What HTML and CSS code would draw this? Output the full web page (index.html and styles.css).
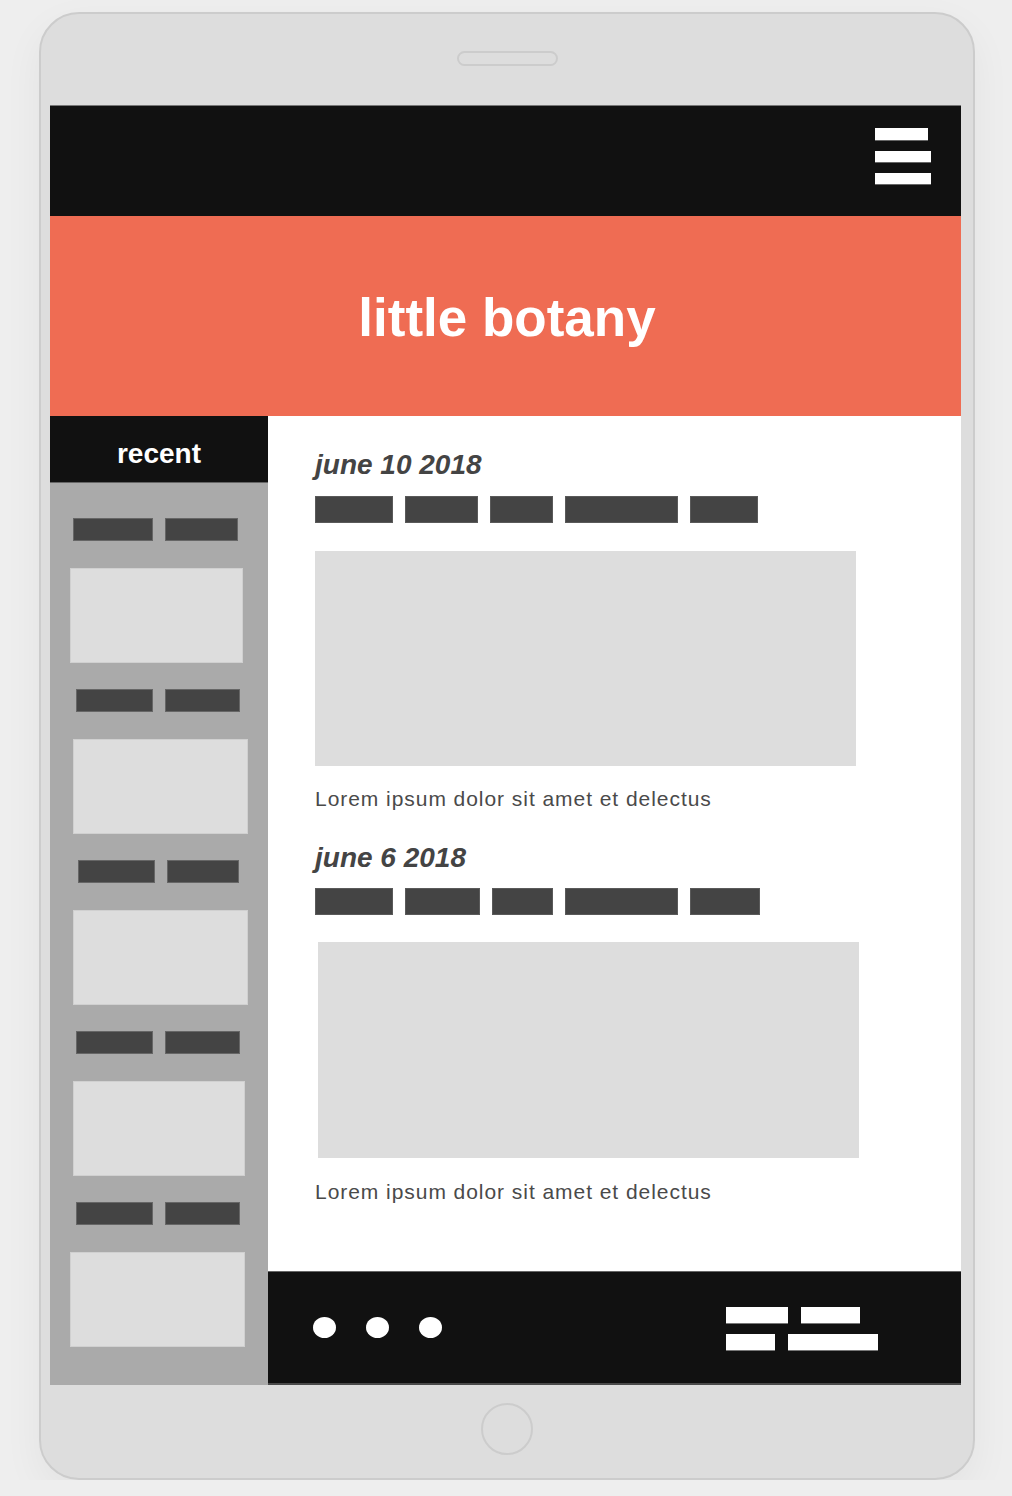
FILE: index.html
```html
<!DOCTYPE html>
<html>
<head>
<meta charset="utf-8">
<link rel="stylesheet" href="styles.css">
</head>
<body>
<div class="tablet">
  <div class="speaker"></div>
  <div class="screen">
    <div class="topbar">
      <div class="burger"><span class="b1"></span><span></span><span></span></div>
    </div>
    <div class="hero"><h1>little botany</h1></div>
    <div class="body">
      <aside class="sidebar">
        <div class="side-head">recent</div>
        <div class="side-list">
          <div class="item"><div class="tags"><span class="t1"></span><span class="t2"></span></div><div class="thumb"></div></div>
          <div class="item"><div class="tags"><span class="t1"></span><span class="t2"></span></div><div class="thumb"></div></div>
          <div class="item"><div class="tags"><span class="t1"></span><span class="t2"></span></div><div class="thumb"></div></div>
          <div class="item"><div class="tags"><span class="t1"></span><span class="t2"></span></div><div class="thumb"></div></div>
          <div class="item"><div class="tags"><span class="t1"></span><span class="t2"></span></div><div class="thumb"></div></div>
        </div>
      </aside>
      <div class="main">
        <div class="content">
          <article class="post">
            <h2 class="date">june 10 2018</h2>
            <div class="bars"><span style="width:78px"></span><span style="width:73px"></span><span style="width:63px"></span><span style="width:113px"></span><span style="width:68px"></span></div>
            <div class="photo"></div>
            <p class="caption">Lorem ipsum dolor sit amet et delectus</p>
          </article>
          <article class="post second">
            <h2 class="date">june 6 2018</h2>
            <div class="bars"><span style="width:78px"></span><span style="width:75px"></span><span style="width:61px"></span><span style="width:113px"></span><span style="width:70px"></span></div>
            <div class="photo shifted"></div>
            <p class="caption">Lorem ipsum dolor sit amet et delectus</p>
          </article>
        </div>
        <footer class="footer">
          <div class="dots"><span></span><span></span><span></span></div>
          <div class="links">
            <div class="row"><span class="l1"></span><span class="l2"></span></div>
            <div class="row"><span class="l3"></span><span class="l4"></span></div>
          </div>
        </footer>
      </div>
    </div>
  </div>
  <div class="home"></div>
</div>
</body>
</html>
```

FILE: styles.css
```css
html, body {
  margin: 0;
  padding: 0;
  background: #eeeeee;
  font-family: "Liberation Sans", Arial, sans-serif;
}

.tablet {
  box-sizing: border-box;
  width: 936px;
  height: 1468px;
  margin: 12px 0 0 39px;
  border: 2px solid #cccccc;
  border-radius: 40px;
  background: #dddddd;
  box-shadow: 0 14px 40px rgba(0, 0, 0, 0.05);
  display: flex;
  flex-direction: column;
}

.speaker {
  box-sizing: border-box;
  width: 101px;
  height: 15px;
  margin: 37px auto 0;
  border: 2px solid #cccccc;
  border-radius: 8px;
}

.screen {
  width: 911px;
  margin: 39px 0 0 9px;
  display: flex;
  flex-direction: column;
}

.topbar {
  box-sizing: border-box;
  height: 111px;
  background: #111111;
  border-top: 1px solid #777777;
  display: flex;
  justify-content: flex-end;
  padding: 22px 30px 0 0;
}

.burger {
  display: flex;
  flex-direction: column;
  align-items: flex-start;
  gap: 10px;
}
.burger span {
  display: block;
  width: 56px;
  height: 11px;
  background: #ffffff;
  border-bottom: 1px solid #666666;
}
.burger .b1 {
  width: 53px;
  height: 12px;
}

.hero {
  height: 200px;
  background: #ef6c53;
  display: flex;
  align-items: center;
  justify-content: center;
}
.hero h1 {
  margin: 0;
  color: #ffffff;
  font-size: 53px;
  font-weight: bold;
  line-height: 60px;
  padding: 4px 0 0 3px;
}

.body {
  display: flex;
  align-items: stretch;
}

.sidebar {
  width: 218px;
  background: #aaaaaa;
  flex: none;
}
.side-head {
  box-sizing: border-box;
  height: 67px;
  background: #111111;
  border-bottom: 1px solid #666666;
  color: #ffffff;
  font-size: 28px;
  font-weight: bold;
  text-align: center;
  line-height: 76px;
}
.side-list {
  padding: 35px 0 38px;
  display: flex;
  flex-direction: column;
  gap: 26px;
}
.item {
  display: flex;
  flex-direction: column;
  gap: 27px;
}
.tags {
  display: flex;
  gap: 12px;
  padding-left: 26px;
}
.tags span {
  box-sizing: border-box;
  height: 23px;
  background: #444444;
  border: 1px solid #666666;
}
.tags .t1 { width: 77px; }
.tags .t2 { width: 75px; }
.thumb {
  box-sizing: border-box;
  width: 175px;
  height: 95px;
  margin-left: 22px;
  background: #dddddd;
  border: 1px solid #d0d0d0;
}
.item:nth-child(1) .tags { padding-left: 23px; }
.item:nth-child(1) .tags .t1 { width: 80px; }
.item:nth-child(1) .tags .t2 { width: 73px; }
.item:nth-child(1) .thumb { margin-left: 20px; width: 173px; }
.item:nth-child(3) .tags { padding-left: 28px; }
.item:nth-child(3) .tags .t2 { width: 72px; }
.item:nth-child(3) .thumb { margin-left: 23px; }
.item:nth-child(2) .thumb { margin-left: 23px; }
.item:nth-child(4) .thumb { margin-left: 23px; width: 172px; }
.item:nth-child(5) .thumb { margin-left: 20px; }

.main {
  flex: 1;
  display: flex;
  flex-direction: column;
}
.content {
  flex: 1;
  background: #ffffff;
  padding: 33px 0 0 47px;
}

.date {
  margin: 0;
  font-size: 28px;
  line-height: 32px;
  font-weight: bold;
  font-style: italic;
  color: #444444;
}
.bars {
  display: flex;
  gap: 12px;
  margin-top: 15px;
}
.bars span {
  box-sizing: border-box;
  height: 27px;
  background: #444444;
  border: 1px solid #5a5a5a;
}
.photo {
  width: 541px;
  height: 215px;
  margin-top: 28px;
  background: #dddddd;
}
.photo.shifted {
  margin-left: 3px;
  height: 216px;
  margin-top: 27px;
}
.caption {
  margin: 20px 0 0;
  font-size: 21px;
  letter-spacing: 0.95px;
  line-height: 26px;
  color: #4a4a4a;
}
.second {
  margin-top: 30px;
}
.second .bars {
  margin-top: 14px;
}
.second .caption {
  margin-top: 21px;
}

.footer {
  box-sizing: border-box;
  height: 114px;
  background: #111111;
  border-top: 1px solid #666666;
  border-bottom: 2px solid #4a4a4a;
  display: flex;
  align-items: center;
  justify-content: space-between;
  padding: 0 83px 0 45px;
}
.dots {
  display: flex;
  gap: 30px;
}
.dots span {
  width: 23px;
  height: 21px;
  border-radius: 50%;
  background: #ffffff;
}
.links {
  display: flex;
  flex-direction: column;
  gap: 10px;
  padding-top: 2px;
}
.row {
  display: flex;
  gap: 13px;
}
.row span {
  height: 17px;
  background: #ffffff;
  border-bottom: 1px solid #777777;
  box-sizing: border-box;
}
.l1 { width: 62px; }
.l2 { width: 59px; }
.l3 { width: 49px; }
.l4 { width: 90px; }

.home {
  box-sizing: border-box;
  width: 52px;
  height: 52px;
  margin: 18px auto 0;
  border: 2px solid #cccccc;
  border-radius: 50%;
}
```
